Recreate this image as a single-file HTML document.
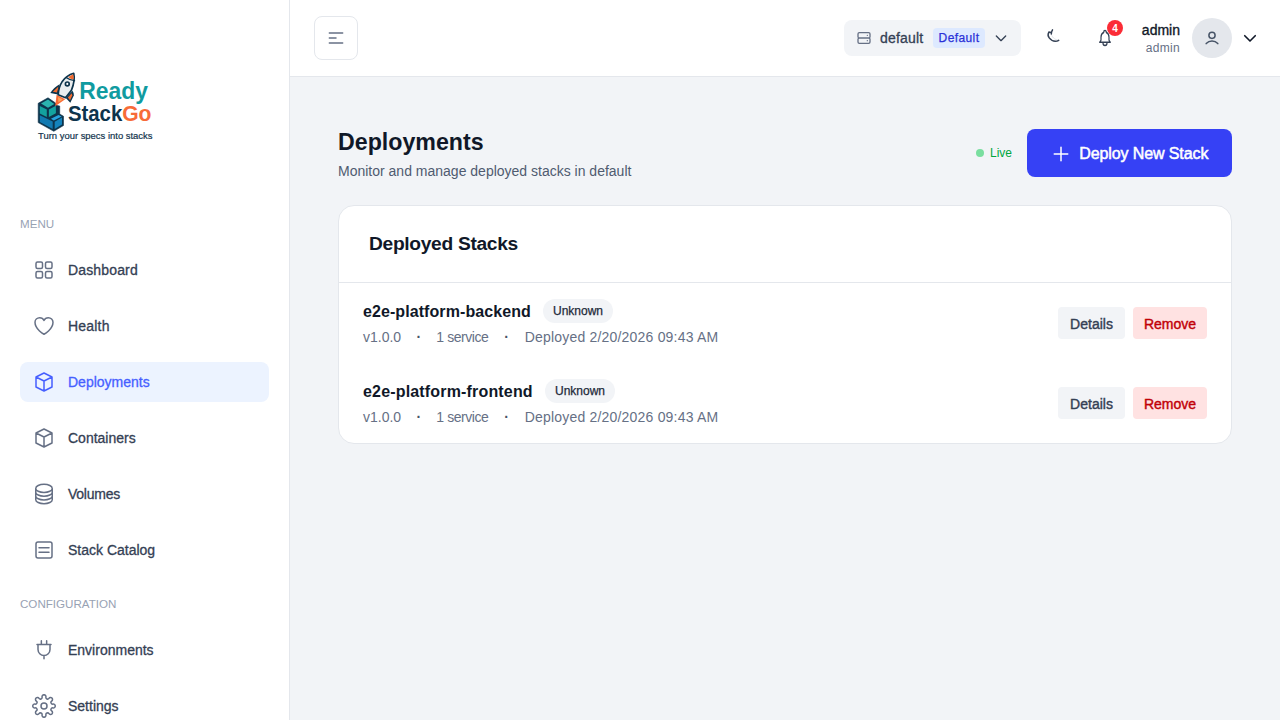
<!DOCTYPE html>
<html lang="en">
<head>
<meta charset="utf-8">
<title>Deployments - ReadyStackGo</title>
<style>
*{box-sizing:border-box;margin:0;padding:0}
html,body{width:1280px;height:720px;overflow:hidden}
body{font-family:"Liberation Sans",sans-serif;background:#f2f4f7;color:#344054;position:relative;font-size:14px;line-height:20px}
svg{display:block}
a{color:inherit;text-decoration:none}
ul{list-style:none}
button{font-family:inherit;border:0;background:none;color:inherit}

/* ---------- sidebar ---------- */
#sidebar{position:absolute;left:0;top:0;width:290px;height:720px;background:#fff;border-right:1px solid #e4e7ec}
#logo{position:absolute;left:30px;top:66px}
.menu-h{position:absolute;left:20px;font-size:11.6px;line-height:20px;color:#98a2b3;text-transform:uppercase;white-space:nowrap}
.nav{position:absolute;left:20px;width:249px}
.nav li{height:40px;margin-bottom:16px}
.nav a{display:flex;align-items:center;height:40px;padding:0 12px;border-radius:8px;font-size:14px;color:#344054;-webkit-text-stroke:.3px #344054;white-space:nowrap}
.nav a svg{width:24px;height:24px;margin-right:12px;color:#667085;flex:none}
.nav a.active{background:#ecf3ff;color:#465fff;-webkit-text-stroke:.3px #465fff}
.nav a.active svg{color:#465fff}
.ic{fill:none;stroke:currentColor;stroke-width:1.5;stroke-linecap:round;stroke-linejoin:round}

/* ---------- header ---------- */
#header{position:absolute;left:290px;top:0;width:990px;height:77px;background:#fff;border-bottom:1px solid #e4e7ec}
#toggle{position:absolute;left:24px;top:16px;width:44px;height:44px;border:1px solid #e4e7ec;border-radius:8px;color:#667085;display:flex;align-items:center;justify-content:center}
#env{position:absolute;left:554px;top:20px;width:177px;height:36px;border-radius:8px;background:#f2f4f7;display:flex;align-items:center;padding:0 12px;font-size:14px;color:#344054;white-space:nowrap}
#env .srv{width:16px;height:16px;color:#667085;margin-right:8px;flex:none}
#env .nm{-webkit-text-stroke:.3px #344054;letter-spacing:.17px}
#env .badge{letter-spacing:.4px;margin-left:auto;margin-right:8px;width:52px;height:20px;border-radius:4px;background:#dde9ff;color:#2a31d8;font-size:12px;line-height:20px;text-align:center;-webkit-text-stroke:.25px #2a31d8}
#env .chev{width:16px;height:16px;color:#344054;flex:none}
#moon{position:absolute;left:753px;top:26px;width:24px;height:24px}
#bell{position:absolute;left:807px;top:28px;width:16px;height:20px;color:#344054}
#bell svg{width:16px;height:20px}
#count{position:absolute;left:817px;top:20px;width:16px;height:16px;border-radius:8px;background:#fb2c36;color:#fff;font-size:10px;line-height:17.6px;font-weight:700;text-align:center}
#user{position:absolute;right:24px;top:0;height:76px}
#uname{position:absolute;right:100px;top:20px;width:80px;text-align:right;font-size:14px;line-height:20px;color:#101828;-webkit-text-stroke:.35px #101828}
#urole{position:absolute;right:100px;top:38.5px;width:80px;text-align:right;letter-spacing:.3px;font-size:12px;line-height:18px;color:#667085}
#avatar{position:absolute;left:902px;top:18px;width:40px;height:40px;border-radius:20px;background:#e4e7ec;color:#475467}
#avatar svg{position:absolute;left:10px;top:10px;width:20px;height:20px}
#uchev{position:absolute;left:951px;top:29px;width:18px;height:18px;color:#101828}

/* ---------- main ---------- */
#main{position:absolute;left:290px;top:77px;width:990px;height:643px}
h1{position:absolute;left:48px;top:49px;font-size:23.2px;line-height:32px;font-weight:700;color:#101828;white-space:nowrap}
#sub{position:absolute;left:48px;top:84px;font-size:14px;line-height:20px;color:#4f5b70;white-space:nowrap}
#live{position:absolute;left:686px;top:66px;font-size:12px;line-height:20px;color:#00a63e;white-space:nowrap;display:flex;align-items:center}
#live i{display:block;width:8px;height:8px;border-radius:4px;background:#7ade9f;margin-right:6px}
#deploy{position:absolute;left:737px;top:52px;width:205px;height:48px;padding-top:1px;padding-left:.5px;letter-spacing:-.1px;border-radius:8px;background:#3641f5;color:#fff;font-size:16px;display:flex;align-items:center;justify-content:center;white-space:nowrap;-webkit-text-stroke:.5px #fff}
#deploy svg{width:20px;height:20px;margin-right:8px}
#card{position:absolute;left:48px;top:128px;width:894px;height:239px;border:1px solid #e4e7ec;border-radius:16px;background:#fff}
#card h2{position:absolute;left:30px;top:24.200px;font-size:19.2px;letter-spacing:-.31px;line-height:28px;font-weight:700;color:#101828;white-space:nowrap}
#card hr{position:absolute;left:0;top:76px;width:892px;border:0;border-top:1px solid #e4e7ec}
.row{position:absolute;left:0;width:892px;height:80px}
.row h3{position:absolute;left:24px;top:17px;font-size:16px;line-height:24px;font-weight:700;color:#101828;white-space:nowrap}
.row .st{position:absolute;top:16px;height:24px;border-radius:12px;background:#f2f4f7;color:#1d2939;font-size:12px;line-height:24px;padding:0 10px;white-space:nowrap;-webkit-text-stroke:.25px #1d2939}
.row .meta{position:absolute;left:24px;top:44px;font-size:14px;line-height:20px;color:#667085;white-space:nowrap}
.row .meta b{font-weight:700;color:#475467}
.b1{margin:0 15.1px 0 16.6px}
.b2{margin:0 15.6px 0 17px}
.row .meta span{display:inline-block}
.m1{width:37px}
.m2{width:51px;letter-spacing:-.45px}
.m3{letter-spacing:.2px}
.btn{position:absolute;top:24px;height:32px;border-radius:4px;font-size:14px;line-height:34px;text-align:center;white-space:nowrap}
.btn.d{left:719px;width:67px;background:#f2f4f7;color:#344054;-webkit-text-stroke:.4px #344054}
.btn.r{left:794px;width:74px;background:#ffe2e2;color:#c10007;-webkit-text-stroke:.4px #c10007}
</style>
</head>
<body>

<aside id="sidebar">
  <div id="logo"><svg width="130" height="84" viewBox="30 66 130 84" font-family="Liberation Sans, sans-serif">
    <!-- cubes -->
    <polygon points="48,97.8 38.2,103.3 38.2,122.6 53.8,131.3 63.5,125.5 63.5,116.2 59.7,114.1 59.7,106 57,105.6 55.6,103" fill="#0d344c" stroke="#0d344c" stroke-width=".6" stroke-linejoin="round"/>
    <polygon points="48,99.5 41,103.6 48,107.7 54.3,103.9" fill="#2bb4af"/>
    <polygon points="39.8,106 46.8,109.5 46.8,117 39.8,113.5" fill="#13a19e"/>
    <polygon points="48.9,109.5 55.9,105.7 55.9,113.3 48.9,117" fill="#14a3a0"/>
    <polygon points="39.8,115.3 52.7,121.4 52.7,129 39.8,122" fill="#127ab1"/>
    <polygon points="54.7,121.7 62,117.6 62,124.6 54.7,129" fill="#1483bc"/>
    <polygon points="50.9,118.8 58.5,115 61.7,116.5 53.8,120.5" fill="#27a3e0"/>
    <!-- rocket -->
    <polygon points="56.6,94.8 65.2,99.3 55.2,106.3" fill="#fa6b35"/>
    <polygon points="58,97 62.9,99.5 58.4,102.2" fill="#fca55b"/>
    <g stroke-linejoin="round" stroke-linecap="round">
      <path d="M59.600 84.200C56 86.300 52.300 89.500 50.300 93L58 94.600Z" fill="#0d344c"/>
      <polygon points="58.500,86.400 52.800,91.700 57.100,92.500" fill="#f26a2e"/>
      <path d="M72.500 90.800C73.500 92.300 73.900 93.800 73.800 95.500L70.300 102.700L65.800 98Z" fill="#0d344c"/>
      <polygon points="71.700,93.200 72.300,95.400 70,100.300 67.900,97.600" fill="#f26a2e"/>
      <path d="M73.700 73.300C74.700 77.500 74 84 71.400 90.400L65.500 97.700L58.200 94.700C58.500 89 60.300 84.500 62.300 81.400C65 77.600 69.200 74.600 73.700 73.300Z" fill="#e9edef" stroke="#0d344c" stroke-width="1.7"/>
      <path d="M68.300 77L73.200 74.200C73.700 76 73.800 77.800 73.600 79.600C71.500 79.300 69.800 78.300 68.300 77Z" fill="#f26a2e"/>
      <path d="M66.100 77.500Q70 80.300 74.500 80.600" fill="none" stroke="#0d344c" stroke-width="1.4"/>
      <circle cx="67.300" cy="83.900" r="1.900" fill="#fff" stroke="#0d344c" stroke-width="1.7"/>
    </g>
    <text x="79.2" y="98.8" font-size="23.7" font-weight="700" fill="#109ba0" textLength="68.7" lengthAdjust="spacingAndGlyphs">Ready</text>
    <text x="67.9" y="120.5" font-size="22.4" font-weight="700" fill="#0d344c" textLength="54.4" lengthAdjust="spacingAndGlyphs">Stack</text>
    <text x="122.2" y="120.5" font-size="22.4" font-weight="700" fill="#f76b38" textLength="29.3" lengthAdjust="spacingAndGlyphs">Go</text>
    <text x="38" y="138.9" font-size="9.5" fill="#12344d" stroke="#12344d" stroke-width=".2" textLength="114.500" lengthAdjust="spacingAndGlyphs">Turn your specs into stacks</text>
  </svg></div>
  <h3 class="menu-h" style="top:214px;font-weight:400">Menu</h3>
  <ul class="nav" style="top:250px">
    <li><a href="#"><svg viewBox="0 0 24 24" class="ic"><rect x="4" y="4" width="6.5" height="6.5" rx="1.5"/><rect x="13.5" y="4" width="6.5" height="6.5" rx="1.5"/><rect x="4" y="13.5" width="6.5" height="6.5" rx="1.5"/><rect x="13.5" y="13.5" width="6.5" height="6.5" rx="1.5"/></svg><span style="letter-spacing:.15px">Dashboard</span></a></li>
    <li><a href="#"><svg viewBox="0 0 24 24" class="ic"><path d="M21 8.25c0-2.485-2.099-4.5-4.688-4.5-1.935 0-3.597 1.126-4.312 2.733-.715-1.607-2.377-2.733-4.313-2.733C5.1 3.75 3 5.765 3 8.25c0 7.22 9 12 9 12s9-4.78 9-12Z"/></svg><span style="letter-spacing:.2px">Health</span></a></li>
    <li><a href="#" class="active"><svg viewBox="0 0 24 24" class="ic"><path d="M20 7l-8-4-8 4m16 0l-8 4m8-4v10l-8 4m0-10L4 7m8 4v10M4 7v10l8 4"/></svg><span>Deployments</span></a></li>
    <li><a href="#"><svg viewBox="0 0 24 24" class="ic"><path d="M20 7l-8-4-8 4m16 0l-8 4m8-4v10l-8 4m0-10L4 7m8 4v10M4 7v10l8 4"/></svg><span>Containers</span></a></li>
    <li><a href="#"><svg viewBox="0 0 24 24" class="ic"><path d="M20.25 6.375c0 2.278-3.694 4.125-8.250 4.125S3.750 8.653 3.750 6.375m16.500 0c0-2.278-3.694-4.125-8.250-4.125S3.750 4.097 3.750 6.375m16.500 0v11.250c0 2.278-3.694 4.125-8.250 4.125s-8.250-1.847-8.250-4.125V6.375m16.500 0v3.750m-16.500-3.750v3.750m16.500 0v3.750C20.250 16.153 16.556 18 12 18s-8.250-1.847-8.250-4.125v-3.750m16.500 0c0 2.278-3.694 4.125-8.250 4.125s-8.250-1.847-8.250-4.125"/></svg><span style="letter-spacing:-.25px">Volumes</span></a></li>
    <li><a href="#"><svg viewBox="0 0 24 24" class="ic"><rect x="4" y="4" width="16" height="16" rx="2"/><path d="M7 9.75h10M7 14.25h10"/></svg><span>Stack Catalog</span></a></li>
  </ul>
  <h3 class="menu-h" style="top:594px;font-weight:400">Configuration</h3>
  <ul class="nav" style="top:630px">
    <li><a href="#"><svg viewBox="0 0 24 24" class="ic"><path d="M9.35 2.7v3.8M14.65 2.7v3.8M5 6.5h14M6 6.5v5a6 6 0 0 0 12 0v-5M12 17.500v3.200"/></svg><span>Environments</span></a></li>
    <li><a href="#"><svg viewBox="0 0 24 24" class="ic"><path d="M10.09 3.08A1.95 1.95 0 1 1 13.91 3.08A1.68 1.68 0 0 0 16.95 4.34A1.95 1.95 0 1 1 19.66 7.05A1.68 1.68 0 0 0 20.92 10.09A1.95 1.95 0 1 1 20.92 13.91A1.68 1.68 0 0 0 19.66 16.95A1.95 1.95 0 1 1 16.95 19.66A1.68 1.68 0 0 0 13.91 20.92A1.95 1.95 0 1 1 10.09 20.92A1.68 1.68 0 0 0 7.05 19.66A1.95 1.95 0 1 1 4.34 16.95A1.68 1.68 0 0 0 3.08 13.91A1.95 1.95 0 1 1 3.08 10.09A1.68 1.68 0 0 0 4.34 7.05A1.95 1.95 0 1 1 7.05 4.34A1.68 1.68 0 0 0 10.09 3.08Z"/><circle cx="12" cy="12" r="3"/></svg><span>Settings</span></a></li>
  </ul>
</aside>

<header id="header">
  <button id="toggle" aria-label="Toggle sidebar"><svg width="16" height="12" viewBox="0 0 16 12"><path fill="currentColor" d="M.583 1a.75.75 0 0 1 .75-.75h13.334a.75.75 0 0 1 0 1.500H1.333A.75.75 0 0 1 .583 1zm0 10a.75.75 0 0 1 .75-.75h13.334a.75.75 0 0 1 0 1.500H1.333a.75.75 0 0 1-.75-.75zm.75-5.750a.75.750 0 0 0 0 1.500H8a.75.750 0 0 0 0-1.500z"/></svg></button>
  <div id="env">
    <svg class="srv ic" viewBox="0 0 24 24" style="stroke-width:2"><path d="M5 12h14M5 12a2 2 0 0 1-2-2V6a2 2 0 0 1 2-2h14a2 2 0 0 1 2 2v4a2 2 0 0 1-2 2M5 12a2 2 0 0 0-2 2v4a2 2 0 0 0 2 2h14a2 2 0 0 0 2-2v-4a2 2 0 0 0-2-2m-2-4h.01M17 16h.01"/></svg>
    <span class="nm">default</span>
    <span class="badge">Default</span>
    <svg class="chev ic" viewBox="0 0 24 24" style="stroke-width:2"><path d="M19 9l-7 7-7-7"/></svg>
  </div>
  <div id="moon"><svg width="24" height="24" viewBox="0 0 24 24" fill="none" stroke-linecap="round" stroke-linejoin="round"><path d="M8.300 8C8.600 11 11.500 13.800 15.700 14.300" stroke="#e4e7ec" stroke-width="1"/><path d="M5.900 6.100C4.700 8.200 5 10.400 6.200 11.900C7.800 14 10 15.300 12.300 15.300C13.600 15.300 14.800 14.900 15.700 14.300M8.100 6.400L5.900 6.100M9.500 3.900C8.700 5.200 8.300 6.600 8.300 8" stroke="#344054" stroke-width="1.5"/></svg></div>
  <div id="bell"><svg viewBox="0 0 24 24" preserveAspectRatio="none" class="ic" style="stroke-width:1.8"><path d="M15 17h5l-1.405-1.405A2.032 2.032 0 0 1 18 14.158V11a6.002 6.002 0 0 0-4-5.659V5a2 2 0 1 0-4 0v.341C7.670 6.165 6 8.388 6 11v3.159c0 .538-.214 1.055-.595 1.436L4 17h5m6 0v1a3 3 0 1 1-6 0v-1m6 0H9"/></svg></div>
  <span id="count">4</span>
  <div id="uname">admin</div>
  <div id="urole">admin</div>
  <div id="avatar"><svg viewBox="0 0 20 20" class="ic"><circle cx="10" cy="7.300" r="3.100"/><path d="M4.200 15.600A7.800 7.800 0 0 1 15.800 15.600"/></svg></div>
  <svg id="uchev" class="ic" viewBox="0 0 24 24" style="stroke-width:2.2"><path d="M19 9l-7 7-7-7"/></svg>
</header>

<main id="main">
  <h1>Deployments</h1>
  <p id="sub">Monitor and manage deployed stacks in default</p>
  <div id="live"><i></i>Live</div>
  <a id="deploy" href="#"><svg viewBox="0 0 20 20" class="ic"><path d="M10 3.250v13.500M3.250 10h13.500"/></svg>Deploy New Stack</a>
  <section id="card">
    <h2>Deployed Stacks</h2>
    <hr>
    <div class="row" style="top:77px">
      <h3 style="letter-spacing:.08px">e2e-platform-backend</h3>
      <span class="st" style="left:204px">Unknown</span>
      <p class="meta"><span class="m1">v1.0.0</span><b class="b1">·</b><span class="m2">1 service</span><b class="b2">·</b><span class="m3">Deployed 2/20/2026 09:43 AM</span></p>
      <a class="btn d" href="#">Details</a>
      <a class="btn r" href="#">Remove</a>
    </div>
    <div class="row" style="top:157px">
      <h3 style="letter-spacing:.17px">e2e-platform-frontend</h3>
      <span class="st" style="left:206px">Unknown</span>
      <p class="meta"><span class="m1">v1.0.0</span><b class="b1">·</b><span class="m2">1 service</span><b class="b2">·</b><span class="m3">Deployed 2/20/2026 09:43 AM</span></p>
      <a class="btn d" href="#">Details</a>
      <a class="btn r" href="#">Remove</a>
    </div>
  </section>
</main>

</body>
</html>
